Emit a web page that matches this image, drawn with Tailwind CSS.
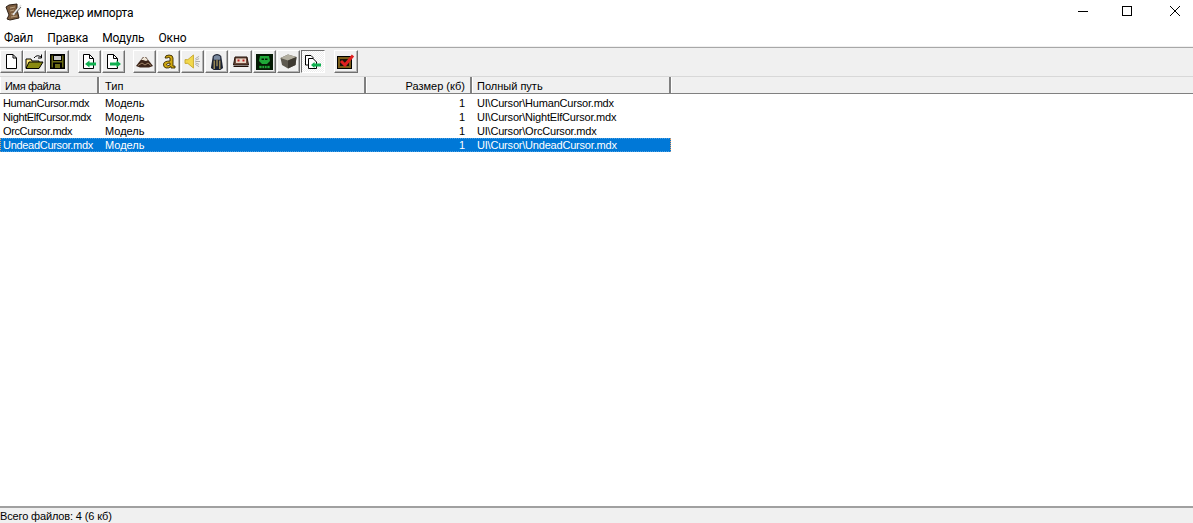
<!DOCTYPE html>
<html lang="ru">
  <head>
    <meta charset="UTF-8" />
    <title>Менеджер импорта</title>
    <script src="https://cdn.jsdelivr.net/npm/@tailwindcss/browser@4"></script>
  </head>
  <body class="bg-white h-[523px] w-[1193px] overflow-hidden flex flex-col font-['Liberation_Sans',sans-serif] text-[11px] text-black">
    <!-- title bar -->
    <div class="h-[25px] flex items-center shrink-0">
      <svg class="ml-[4px] w-[19px] h-[19px]" viewBox="0 0 19 19">
        <path d="M2 4 L5 2 L13 1 L13 6 L15 15 L6 17 L3 16 L5 12 Z" fill="#7c5c3e" stroke="#2e2015" />
        <path d="M6 5 L11 4 M6 8 L10 7 M7 11 L12 10 M7 14 L13 13" stroke="#b8a080" />
        <path d="M9 12 L17 2" stroke="#e4e4e4" stroke-width="2" />
        <path d="M11 11 L17 4" stroke="#606060" />
      </svg>
      <span class="ml-[3px] font-['Roboto',sans-serif] text-[12px] tracking-[-0.2px]">Менеджер импорта</span>
      <div class="ml-auto flex items-center">
        <svg class="w-[46px] h-[25px]" viewBox="0 0 46 25"><path d="M23 11.5 H33" stroke="#000" /></svg>
        <svg class="w-[46px] h-[25px]" viewBox="0 0 46 25"><rect x="21.5" y="6.5" width="9" height="9" fill="none" stroke="#000" /></svg>
        <svg class="w-[46px] h-[25px]" viewBox="0 0 46 25"><path d="M23 6 L33 16 M33 6 L23 16" stroke="#000" /></svg>
      </div>
    </div>
    <!-- menu -->
    <div class="h-[21px] flex items-center gap-[14px] pl-[4px] pt-[4px] shrink-0 font-['Roboto',sans-serif] text-[12px] tracking-[-0.12px]">
      <span>Файл</span><span>Правка</span><span>Модуль</span><span>Окно</span>
    </div>
    <!-- toolbar -->
    <div class="h-[30px] shrink-0 bg-[#f0f0f0] border-t border-[#f0f0f0] shadow-[inset_0_1px_0_#a8a8a8] flex items-center">
      <div class="flex">
        <button class="w-[23px] h-[23px] flex items-center justify-center border border-t-white border-l-white border-r-[#707070] border-b-[#707070] shadow-[inset_-1px_-1px_0_#b4b4b4]">
          <svg class="w-[13px] h-[15px]" viewBox="0 0 13 15"><path d="M1.5 .5 H8 L11.5 4 V14.5 H1.5 Z" fill="#fff" stroke="#000" /><path d="M8 .5 V4 H11.5" fill="none" stroke="#000" /></svg>
        </button>
        <button class="w-[23px] h-[23px] flex items-center justify-center border border-t-white border-l-white border-r-[#707070] border-b-[#707070] shadow-[inset_-1px_-1px_0_#b4b4b4]">
          <svg class="w-[19px] h-[15px]" viewBox="0 0 19 15"><path d="M1 5 H6 L7 7 H14 V14 H1 Z" fill="#ffe87a" stroke="#000" /><path d="M1 14.5 L4 8 H18 L14 14.5 Z" fill="#8a8a10" stroke="#000" /><path d="M9 4 Q12 0 16 3 M16.5 0.5 V4 H13" fill="none" stroke="#000" /></svg>
        </button>
        <button class="w-[23px] h-[23px] flex items-center justify-center border border-t-white border-l-white border-r-[#707070] border-b-[#707070] shadow-[inset_-1px_-1px_0_#b4b4b4]">
          <svg class="w-[15px] h-[15px]" viewBox="0 0 15 15"><path d="M.75 .75 H14.25 V14.25 H.75 Z" fill="#6b6b14" stroke="#000" stroke-width="1.5" /><rect x="3.5" y="1.5" width="8" height="5" fill="#c8c8c8" stroke="#000" /><rect x="3" y="8.5" width="9" height="6" fill="#000" /><rect x="5" y="10" width="5" height="4" fill="#6b6b14" /></svg>
        </button>
      </div>
      <div class="flex ml-[9px] gap-px">
        <button class="w-[23px] h-[23px] flex items-center justify-center border border-t-white border-l-white border-r-[#707070] border-b-[#707070] shadow-[inset_-1px_-1px_0_#b4b4b4]">
          <svg class="w-[15px] h-[15px]" viewBox="0 0 15 15"><path d="M1.5 .5 H7.5 L11.5 4.5 V14.5 H1.5 Z" fill="#fff" stroke="#000" /><path d="M7.5 .5 V4.5 H11.5" fill="none" stroke="#000" /><path d="M3 10 L7.5 6.5 V8.5 H14 V11.5 H7.5 V13.5 Z" fill="#10b050" /></svg>
        </button>
        <button class="w-[23px] h-[23px] flex items-center justify-center border border-t-white border-l-white border-r-[#707070] border-b-[#707070] shadow-[inset_-1px_-1px_0_#b4b4b4]">
          <svg class="w-[15px] h-[15px]" viewBox="0 0 15 15"><path d="M1.5 .5 H7.5 L11.5 4.5 V14.5 H1.5 Z" fill="#fff" stroke="#000" /><path d="M15 10 L10.5 6.5 V8.5 H4 V11.5 H10.5 V13.5 Z" fill="#10b050" /><path d="M7.5 .5 V4.5 H11.5" fill="none" stroke="#000" /></svg>
        </button>
      </div>
      <div class="flex ml-[8px] gap-px">
        <button class="w-[23px] h-[23px] flex items-center justify-center border border-t-white border-l-white border-r-[#707070] border-b-[#707070] shadow-[inset_-1px_-1px_0_#b4b4b4]">
          <svg class="w-[17px] h-[12px]" viewBox="0 0 17 12"><path d="M0 10 L7 1 H10 L17 10 L13 11.5 H4 Z" fill="#3c2418" /><path d="M5 4 L8.5 0.5 L12 4 L10 5 L7 4 Z" fill="#efe6d8" /><path d="M2 9.5 L6 7 L9 9 L12 7 L15 9.5" fill="none" stroke="#a08468" /></svg>
        </button>
        <button class="w-[23px] h-[23px] flex items-center justify-center border border-t-white border-l-white border-r-[#707070] border-b-[#707070] shadow-[inset_-1px_-1px_0_#b4b4b4]">
          <svg class="w-[14px] h-[15px]" viewBox="0 1 14 15"><path d="M3 5 Q3 2 7 2 Q11 2 11 5 V13 H13 V15 H9 V13.5 Q7 15.5 4 15 Q1 14 1.5 11 Q2 8 8 8 V5 Q7 3.8 5 5 Z M8 10 Q4.5 10 4.5 12 Q5 13.5 8 12 Z" fill="#d0a810" stroke="#3a2a00" stroke-width=".9" /></svg>
        </button>
        <button class="w-[23px] h-[23px] flex items-center justify-center border border-t-white border-l-white border-r-[#707070] border-b-[#707070] shadow-[inset_-1px_-1px_0_#b4b4b4]">
          <svg class="w-[17px] h-[15px]" viewBox="0 0 18 16"><path d="M1 6 H4 L10 1 V15 L4 10 H1 Z" fill="#f2d84c" stroke="#c8aa30" /><path d="M12 8 H17 M12 5 L16 2.5 M12 11 L16 13.5 M12 6.5 L16 5 M12 9.5 L16 11" stroke="#a8a8a8" /></svg>
        </button>
        <button class="w-[23px] h-[23px] flex items-center justify-center border border-t-white border-l-white border-r-[#707070] border-b-[#707070] shadow-[inset_-1px_-1px_0_#b4b4b4]">
          <svg class="w-[14px] h-[18px]" viewBox="0 0 15 19"><path d="M3 3 Q7.5 -1 12 3 L14 16 L11 18 H4 L1 16 Z" fill="#1c2232" /><path d="M4 3.5 Q7.5 1 11 3.5 L11 7 H4 Z" fill="#7a8aa0" /><path d="M4.5 8 V17 M10.5 8 V17 M7.5 7 V14" stroke="#c0a860" stroke-width="1.2" /></svg>
        </button>
        <button class="w-[23px] h-[23px] flex items-center justify-center border border-t-white border-l-white border-r-[#707070] border-b-[#707070] shadow-[inset_-1px_-1px_0_#b4b4b4]">
          <svg class="w-[16px] h-[11px]" viewBox="0 0 16 11"><path d="M2 1 H14 L15.5 9 H.5 Z" fill="#6a4a3c" stroke="#201008" /><rect x="3" y="2.5" width="10" height="4.5" fill="#e8d8c8" /><rect x="4.5" y="3.5" width="2" height="2" fill="#c02020" /><rect x="9.5" y="3.5" width="2" height="2" fill="#c02020" /><path d="M.5 10.5 H15.5" stroke="#201008" /></svg>
        </button>
        <button class="w-[23px] h-[23px] flex items-center justify-center border border-t-white border-l-white border-r-[#707070] border-b-[#707070] shadow-[inset_-1px_-1px_0_#b4b4b4]">
          <svg class="w-[17px] h-[16px]" viewBox="0 0 17 16"><rect width="17" height="16" fill="#041a04" /><path d="M4 2 H13 L14 7 L11 10 H6 L3 7 Z" fill="#1fa838" /><path d="M5.5 4.5 H8 V6 H5.5 Z M9 4.5 H11.5 V6 H9 Z" fill="#041a04" /><path d="M3 11.5 H14 V14.5 H3 Z M6 11.5 V14.5 M8.5 11.5 V14.5 M11 11.5 V14.5" fill="#1fa838" stroke="#041a04" stroke-width=".7" /></svg>
        </button>
        <button class="w-[23px] h-[23px] flex items-center justify-center border border-t-white border-l-white border-r-[#707070] border-b-[#707070] shadow-[inset_-1px_-1px_0_#b4b4b4]">
          <svg class="w-[17px] h-[15px]" viewBox="0 0 17 15"><path d="M.5 4 L8 .5 L16.5 3 L15.5 11 L8 14.5 L2 11 Z" fill="#5e5a50" /><path d="M.5 4 L8 .5 L16.5 3 L8 6.5 Z" fill="#b2ae9f" /><path d="M8 6.5 L16.5 3 L15.5 11 L8 14.5 Z" fill="#3e3a32" /></svg>
        </button>
        <button class="w-[24px] h-[23px] flex items-center justify-center border border-t-[#707070] border-l-[#707070] border-r-white border-b-white bg-[repeating-conic-gradient(#fff_0_25%,#ececec_0_50%)] bg-[length:2px_2px]">
          <svg class="w-[16px] h-[14px]" viewBox="0 0 16 14"><path d="M.5 .5 H6 L8 2.5 V10 H.5 Z" fill="#fff" stroke="#000" /><path d="M3.5 3.5 H8 L11.5 7 V13.5 H3.5 Z" fill="#fff" stroke="#000" /><path d="M6 10 L9.5 7 V8.5 H16 V11.5 H9.5 V13 Z" fill="#10b050" /></svg>
        </button>
      </div>
      <button class="ml-[9px] w-[24px] h-[23px] flex items-center justify-center border border-t-white border-l-white border-r-[#707070] border-b-[#707070] shadow-[inset_-1px_-1px_0_#b4b4b4]">
        <svg class="w-[18px] h-[15px]" viewBox="0 0 18 15"><rect x=".5" y="2.5" width="14" height="12" fill="#7a5c18" stroke="#000" /><rect x="3" y="5" width="9" height="7" fill="#1c1408" /><path d="M4 7 L8 11 L16 1.5" fill="none" stroke="#e02020" stroke-width="3" /></svg>
      </button>
    </div>
    <!-- table header -->
    <div class="h-[18px] shrink-0 bg-[#f0f0f0] flex border-t border-b border-t-[#d8d8d8] border-b-[#808080]">
      <div class="w-[99px] pl-[4px] tracking-[-0.35px] leading-[18px] border-r-2 border-r-[#808080] border-l border-l-white">Имя файла</div>
      <div class="w-[267px] pl-[5px] leading-[18px] border-r-2 border-r-[#808080] border-l border-l-white">Тип</div>
      <div class="w-[106px] pr-[5px] text-right leading-[18px] border-r-2 border-r-[#808080] border-l border-l-white">Размер (кб)</div>
      <div class="w-[199px] pl-[4px] leading-[18px] border-r-2 border-r-[#808080] border-l border-l-white">Полный путь</div>
      <div class="flex-1 border-l border-l-white"></div>
    </div>
    <!-- file list -->
    <div class="flex-1 pt-[2px]">
      <div class="w-[671px] h-[14px] leading-[14px] flex">
        <span class="w-[99px] pl-[3px] tracking-[-0.37px]">HumanCursor.mdx</span>
        <span class="w-[267px] pl-[6px]">Модель</span>
        <span class="w-[99px] text-right">1</span>
        <span class="pl-[12px] tracking-[-0.2px]">UI\Cursor\HumanCursor.mdx</span>
      </div>
      <div class="w-[671px] h-[14px] leading-[14px] flex">
        <span class="w-[99px] pl-[3px] tracking-[-0.37px]">NightElfCursor.mdx</span>
        <span class="w-[267px] pl-[6px]">Модель</span>
        <span class="w-[99px] text-right">1</span>
        <span class="pl-[12px] tracking-[-0.2px]">UI\Cursor\NightElfCursor.mdx</span>
      </div>
      <div class="w-[671px] h-[14px] leading-[14px] flex">
        <span class="w-[99px] pl-[3px] tracking-[-0.37px]">OrcCursor.mdx</span>
        <span class="w-[267px] pl-[6px]">Модель</span>
        <span class="w-[99px] text-right">1</span>
        <span class="pl-[12px] tracking-[-0.2px]">UI\Cursor\OrcCursor.mdx</span>
      </div>
      <div class="w-[671px] h-[14px] leading-[12px] flex bg-[#0078d7] text-white border border-dotted border-x-[#f0a060] border-y-[#4aa0e4]">
        <span class="w-[98px] pl-[2px] tracking-[-0.3px]">UndeadCursor.mdx</span>
        <span class="w-[267px] pl-[6px]">Модель</span>
        <span class="w-[99px] text-right">1</span>
        <span class="pl-[12px] tracking-[-0.2px]">UI\Cursor\UndeadCursor.mdx</span>
      </div>
    </div>
    <!-- status bar -->
    <div class="h-[17px] shrink-0 bg-[#f0f0f0] border-t-2 border-[#a0a0a0] leading-[16px] tracking-[-0.14px]">Всего файлов: 4 (6 кб)</div>
  </body>
</html>
